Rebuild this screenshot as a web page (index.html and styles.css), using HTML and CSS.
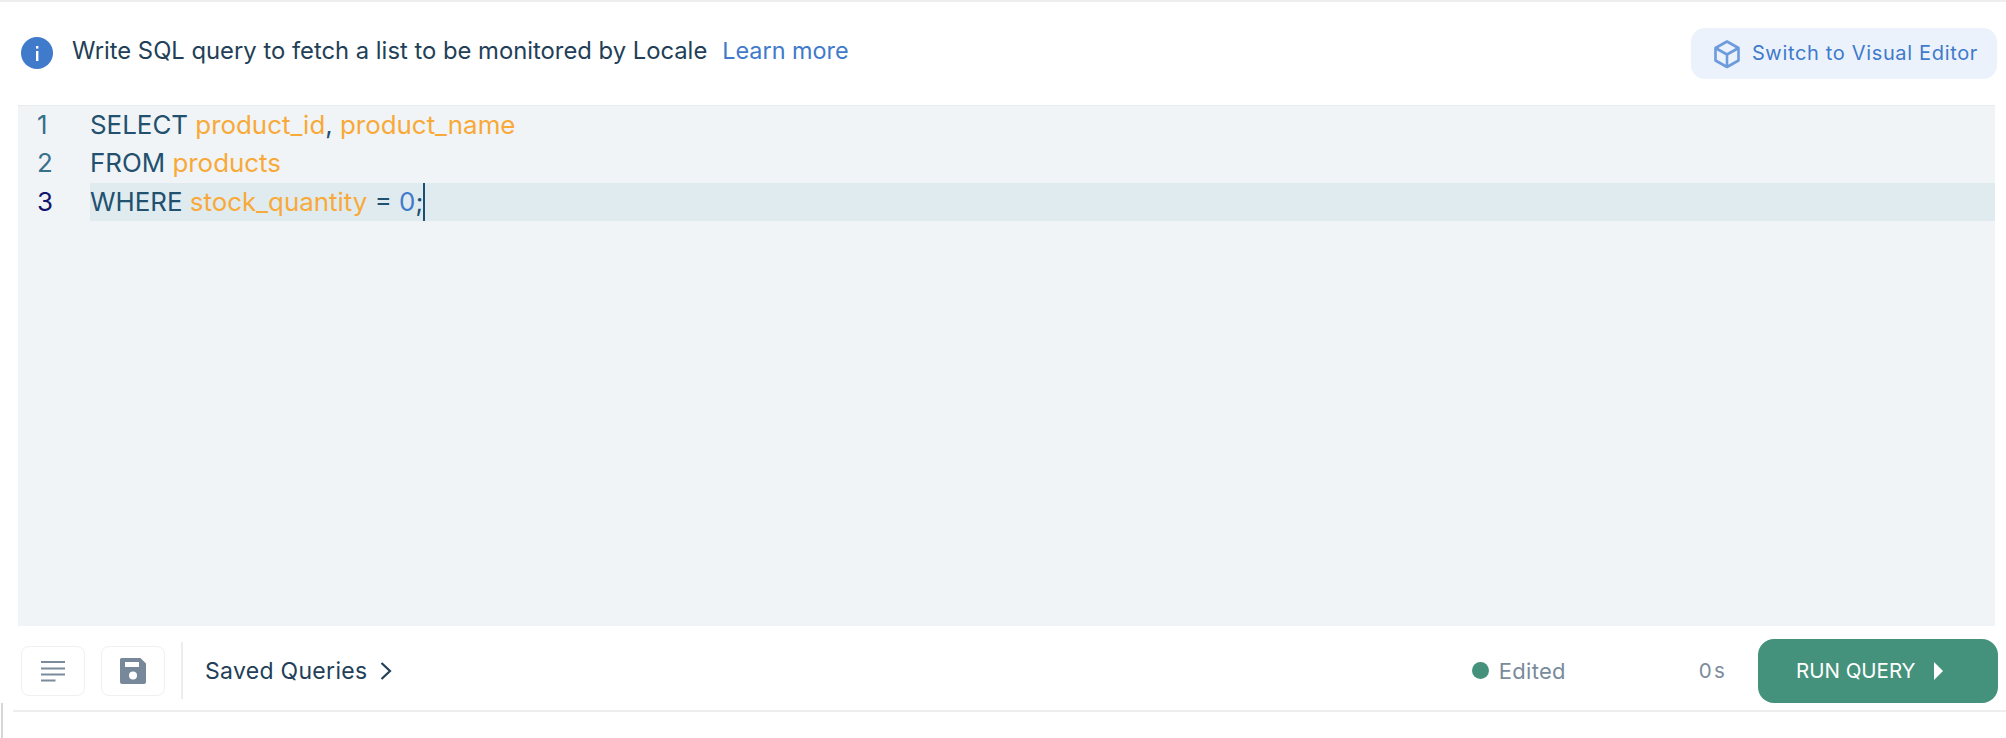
FILE: index.html
```html
<!DOCTYPE html>
<html lang="en">
<head>
<meta charset="utf-8">
<title>SQL Editor</title>
<link rel="stylesheet" href="styles.css">
</head>
<body>
<div class="page">
  <header class="head">
    <div class="intro">
      <svg class="info" width="32" height="32" viewBox="0 0 32 32"><circle cx="16" cy="16" r="16" fill="#3f7acb"/><rect x="15" y="14" width="2.4" height="10" fill="#fff"/><rect x="15" y="9" width="2.4" height="2.6" fill="#fff"/></svg>
      <span class="intro-text">Write SQL query to fetch a list to be monitored by Locale</span>
      <a class="learn">Learn more</a>
    </div>
    <button class="switch">
      <svg width="30" height="30" viewBox="0 0 30 30" fill="none" stroke="#6d9bdb" stroke-width="2.6" stroke-linejoin="round"><path d="M15 2.5 26.5 9v12.5L15 28 3.5 21.5V9Z"/><path d="M3.5 9 15 15.5 26.5 9M15 15.5V28"/></svg>
      <span class="switch-label">Switch to Visual Editor</span>
    </button>
  </header>
  <main class="editor">
    <div class="line"><span class="num">1</span><div class="code"><span class="kw">SELECT</span> <span class="id">product_id</span><span class="kw">,</span> <span class="id">product_name</span></div></div>
    <div class="line"><span class="num">2</span><div class="code"><span class="kw">FROM</span> <span class="id">products</span></div></div>
    <div class="line active"><span class="num">3</span><div class="code"><span class="kw">WHERE</span> <span class="id">stock_quantity</span> <span class="kw">=</span> <span class="val">0</span><span class="kw">;</span><span class="caret"></span></div></div>
  </main>
  <footer class="foot">
    <button class="tool">
      <svg width="24" height="24" viewBox="0 0 24 24" fill="#7a8b9b"><rect y="2" width="24" height="2"/><rect y="8.5" width="24" height="2"/><rect y="14.500" width="24" height="2"/><rect y="20.500" width="14.500" height="2"/></svg>
    </button>
    <button class="tool">
      <svg width="28" height="28" viewBox="0 0 28 28"><path fill="#768899" d="M2.500 1h19L27 6.500V25a2 2 0 0 1-2 2H3a2 2 0 0 1-2-2V2.500A1.500 1.500 0 0 1 2.500 1Z"/><rect x="6" y="5" width="14" height="5" fill="#fff"/><circle cx="14" cy="18.500" r="4" fill="#fff"/></svg>
    </button>
    <div class="divider"></div>
    <button class="saved">
      <span>Saved Queries</span>
      <svg width="12" height="20" viewBox="0 0 12 20" fill="none" stroke="#233f58" stroke-width="2.200"><path d="M1.500 2 10 10l-8.500 8"/></svg>
    </button>
    <div class="status"><span class="dot"></span><span>Edited</span></div>
    <span class="time">0s</span>
    <button class="run">
      <span>RUN QUERY</span>
      <svg width="10" height="18" viewBox="0 0 10 18" fill="#fff"><path d="M1 0 10 9l-9 9Z"/></svg>
    </button>
  </footer>
  <div class="tick"></div>
</div>
</body>
</html>
```
FILE: styles.css
```css
* { box-sizing: border-box; }
html, body { margin: 0; padding: 0; background: #fff; }
body { font-family: Inter, "Liberation Sans", sans-serif; color: #233f58; }
button { font-family: inherit; cursor: pointer; }
.page { position: relative; height: 738px; border-top: 2px solid #eeeeee; overflow: hidden; }

.head { height: 103px; display: flex; justify-content: space-between; align-items: flex-start; padding: 26px 9px 0 21px; }
.intro { display: flex; align-items: center; height: 32px; margin-top: 9px; }
.info { flex: none; margin-right: 19px; }
.intro-text { font-size: 23.800px; margin-bottom: 6px; }
.learn { font-size: 23.400px; color: #3f7acb; margin-left: 15px; margin-bottom: 6px; }
.switch { display: flex; align-items: center; gap: 10px; height: 51px; padding: 0 19px 0 21px; border: 0; border-radius: 14px; background: #ebf2fb; color: #3f7acb; font-size: 20px; letter-spacing: .66px; }
.switch-label { margin-bottom: 2px; }

.editor { height: 521px; margin: 0 11px 0 18px; background: #f0f4f7; border-top: 1px solid #e8ecef; }
.line { display: flex; height: 38.300px; font-size: 25.900px; line-height: 38.300px; }
.num { flex: none; width: 72px; padding-left: 19px; color: #38708a; }
.code { flex: 1; white-space: pre; color: #22506f; }
.active .num { color: #14146e; }
.active .code { background: #e0ebef; }
.id { color: #f8a938; }
.val { color: #3f7acb; }
.caret { display: inline-block; width: 2px; height: 38px; background: #1f4d70; vertical-align: top; }

.foot { height: 86px; margin-left: 13px; padding: 5px 8px 0 8px; display: flex; align-items: center; border-bottom: 2px solid #eceeef; }
.tool { display: flex; align-items: center; justify-content: center; width: 64px; height: 50px; margin-right: 16px; padding: 0; background: #fff; border: 1px solid #eef0f2; border-radius: 8px; }
.divider { width: 2px; height: 57px; background: #ebedef; }
.saved { display: flex; align-items: center; gap: 13px; margin-left: 22px; padding: 0; border: 0; background: none; color: #233f58; font-size: 23px; letter-spacing: .3px; }
.status { display: flex; align-items: center; gap: 10px; margin-left: auto; color: #7a8b9b; font-size: 22px; letter-spacing: .3px; }
.dot { width: 17px; height: 17px; border-radius: 50%; background: #44927c; }
.time { margin-left: 133px; color: #7a8b9b; font-size: 20.500px; letter-spacing: 2.200px; }
.run { display: flex; align-items: center; gap: 17px; width: 240px; height: 64px; margin-left: 31px; padding: 0 0 0 38px; border: 0; border-radius: 16px; background: #44927c; color: #fff; font-size: 20.500px; }

.tick { position: absolute; left: 1px; top: 701px; width: 2px; height: 35px; background: #d6d6d6; }
```
